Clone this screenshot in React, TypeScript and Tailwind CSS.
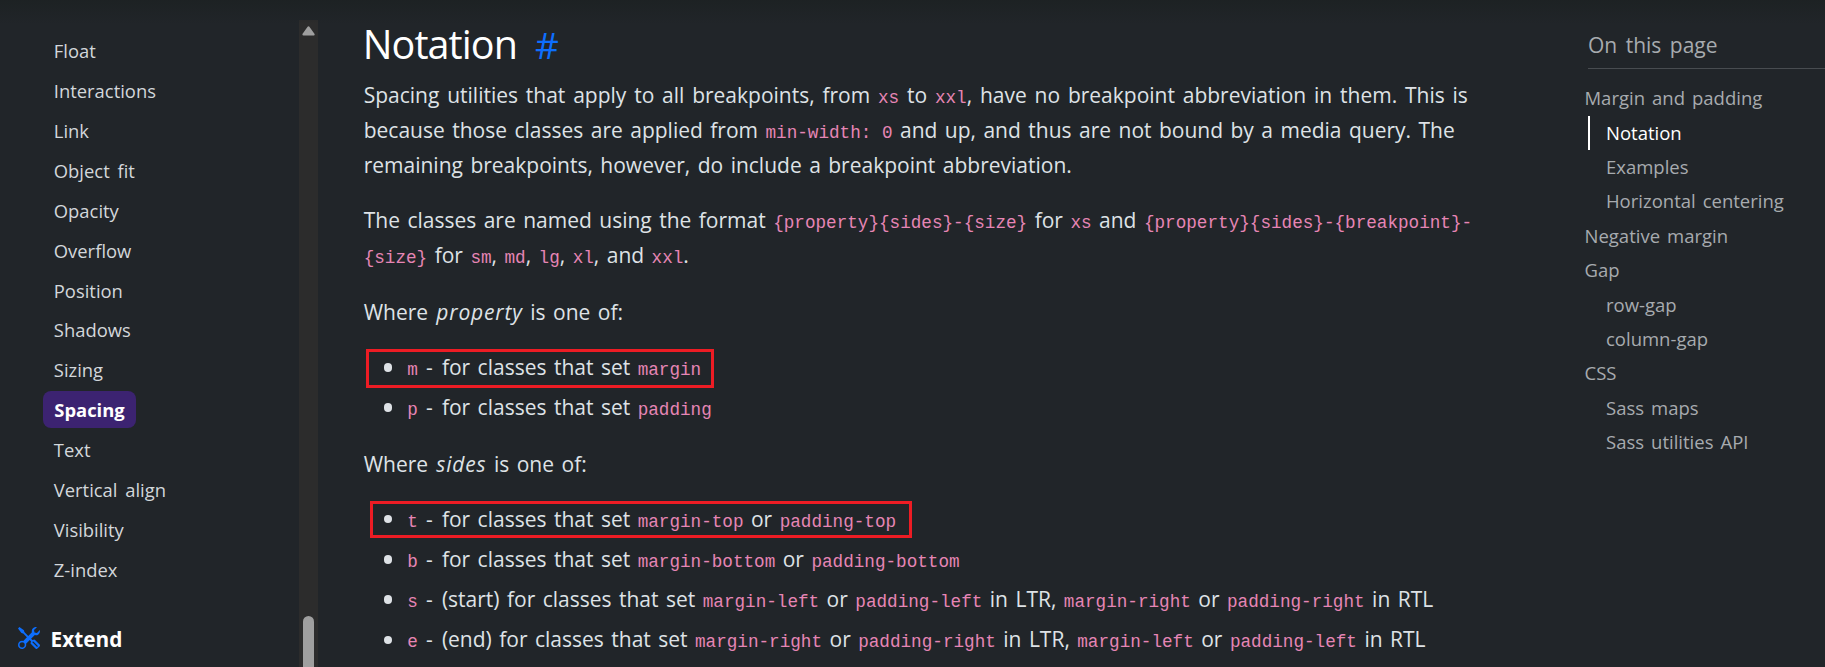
import type { ReactNode } from "react";
import { BsTools } from "react-icons/bs";

const navBefore = ["Float", "Interactions", "Link", "Object fit", "Opacity", "Overflow", "Position", "Shadows", "Sizing"];
const navAfter = ["Text", "Vertical align", "Visibility", "Z-index"];

const toc: { label: string; nested?: boolean; active?: boolean }[] = [
  { label: "Margin and padding" },
  { label: "Notation", nested: true, active: true },
  { label: "Examples", nested: true },
  { label: "Horizontal centering", nested: true },
  { label: "Negative margin" },
  { label: "Gap" },
  { label: "row-gap", nested: true },
  { label: "column-gap", nested: true },
  { label: "CSS" },
  { label: "Sass maps", nested: true },
  { label: "Sass utilities API", nested: true },
];

function C({ children }: { children: ReactNode }) {
  return (
    <code className="font-['Liberation_Mono',monospace] text-[17.65px] leading-none text-[#e685b5] [word-spacing:0]">
      {children}
    </code>
  );
}

function Item({ name, children, frame }: { name: string; children: ReactNode; frame?: ReactNode }) {
  return (
    <li className="relative flex h-[35px] items-center">
      <span className="mr-[15px] size-[8.5px] rounded-full bg-[#dee2e6]" />
      <span>
        <C>{name}</C> <span className="mr-[1.6px] ml-[0.8px]">-</span> {children}
      </span>
      {frame}
    </li>
  );
}

function NavLink({ label }: { label: string }) {
  return (
    <li className="h-[39.93px] pl-[53.8px] leading-[39.93px]">
      <a>{label}</a>
    </li>
  );
}

function Sidebar() {
  return (
    <nav className="w-[299px] shrink-0 pt-[31px] text-[18.4px] text-[#d3d7db] [word-spacing:3px]">
      <ul>
        {navBefore.map((n) => (
          <NavLink key={n} label={n} />
        ))}
        <li className="flex h-[39.93px] items-center pl-[43px]">
          <a className="-mt-px flex h-[37px] w-[93px] items-center justify-center rounded-lg bg-[#3c2371] text-[18.4px] font-bold text-white">
            <span>Spacing</span>
          </a>
        </li>
        {navAfter.map((n) => (
          <NavLink key={n} label={n} />
        ))}
      </ul>
      <div className="mt-[28px] flex h-[40px] items-center pl-[18px]">
        <BsTools className="size-[22px] text-[#0d6efd]" />
        <strong className="ml-[10.5px] pt-[3px] text-[20.8px] font-bold text-white">Extend</strong>
      </div>
    </nav>
  );
}

function Scrollbar() {
  return (
    <div className="mt-5 flex w-[19px] shrink-0 flex-col items-center bg-[#2c2c2c]">
      <svg className="mt-[6px] h-[10px] w-[13px]" viewBox="0 0 13 10">
        <path d="M6.5 1.5 11.5 8.5H1.5Z" fill="#9f9f9f" stroke="#9f9f9f" strokeWidth="2.2" strokeLinejoin="round" />
      </svg>
      <div className="mt-[580px] h-[51px] w-[11px] shrink-0 rounded-t-full bg-[#9f9f9f]" />
    </div>
  );
}

function Content() {
  return (
    <main className="ml-[45.7px] w-[1221.3px] shrink-0 text-[21px] leading-[35px] whitespace-nowrap text-[#dee2e6] [word-spacing:2px]">
      <h2 className="flex h-[78px] items-baseline pt-[18.5px] text-[39.5px] leading-[50px] text-white">
        <span className="-ml-[1px] tracking-[-0.9px]">Notation</span>
        <a className="ml-[18px] text-[37px] font-normal text-[#0d6efd]">#</a>
      </h2>
      <p>
        <span className="[word-spacing:2.35px]">
          Spacing utilities that apply to all breakpoints, from <C>xs</C> to <C>xxl</C>, have no breakpoint abbreviation in them. This is
        </span>
        <br />
        because those classes are applied from <C>min-width: 0</C> and up, and thus are not bound by a media query. The
        <br />
        remaining breakpoints, however, do include a breakpoint abbreviation.
      </p>
      <p className="mt-5">
        The classes are named using the format <C>{"{property}{sides}-{size}"}</C> for <C>xs</C> and{" "}
        <C>{"{property}{sides}-{breakpoint}-"}</C>
        <br />
        <C>{"{size}"}</C> for <C>sm</C>, <C>md</C>, <C>lg</C>, <C>xl</C>, and <C>xxl</C>.
      </p>
      <p className="mt-[22px]">
        Where <em className="ml-[0.7px] tracking-[0.85px]">property</em> is one of:
      </p>
      <ul className="mt-5 flex flex-col gap-[5px] pl-[20px]">
        <Item name="m" frame={<span className="absolute -top-px -left-[18px] h-[39px] w-[348px] border-3 border-[#ed1c24]" />}>
          for classes that set <C>margin</C>
        </Item>
        <Item name="p">
          for classes that set <C>padding</C>
        </Item>
      </ul>
      <p className="mt-[21.5px]">
        Where <em className="ml-[0.7px] tracking-[0.85px]">sides</em> is one of:
      </p>
      <ul className="mt-5 flex flex-col gap-[5.3px] pl-[20px]">
        <Item name="t" frame={<span className="absolute -top-px -left-[13.5px] h-[37px] w-[542px] border-3 border-[#ed1c24]" />}>
          for classes that set <C>margin-top</C> or <C>padding-top</C>
        </Item>
        <Item name="b">
          for classes that set <C>margin-bottom</C> or <C>padding-bottom</C>
        </Item>
        <Item name="s">
          (start) for classes that set <C>margin-left</C> or <C>padding-left</C> in LTR, <C>margin-right</C> or{" "}
          <C>padding-right</C> in RTL
        </Item>
        <Item name="e">
          (end) for classes that set <C>margin-right</C> or <C>padding-right</C> in LTR, <C>margin-left</C> or{" "}
          <C>padding-left</C> in RTL
        </Item>
      </ul>
    </main>
  );
}

function Toc() {
  return (
    <aside className="flex-1 text-[18.5px] text-[#a7abaf]">
      <div className="ml-[3px] h-[69px] border-b border-[#484c50] pt-[28px] text-[21px] leading-[34px] [word-spacing:3px]">
        <strong className="font-normal">On this page</strong>
      </div>
      <ul className="mt-3">
        {toc.map((t) => (
          <li key={t.label} className={t.nested ? "flex h-[34.4px] items-center pl-[3px]" : "flex h-[34.4px] items-center"}>
            {t.active ? (
              <a className="flex h-[34px] items-center border-l-2 border-white pl-[16px] text-white">{t.label}</a>
            ) : (
              <a className={t.nested ? "pl-[18px]" : "-ml-[0.5px]"}>{t.label}</a>
            )}
          </li>
        ))}
      </ul>
    </aside>
  );
}

export default function App() {
  return (
    <div className="relative flex h-[667px] w-[1825px] overflow-hidden bg-[#212529] font-['Open_Sans','Noto_Sans',sans-serif] font-[430] [word-spacing:2.2px]">
      <Sidebar />
      <Scrollbar />
      <Content />
      <Toc />
      <div className="absolute inset-x-0 top-0 h-6 bg-linear-to-b from-[#1c2122] to-transparent opacity-80" />
    </div>
  );
}
